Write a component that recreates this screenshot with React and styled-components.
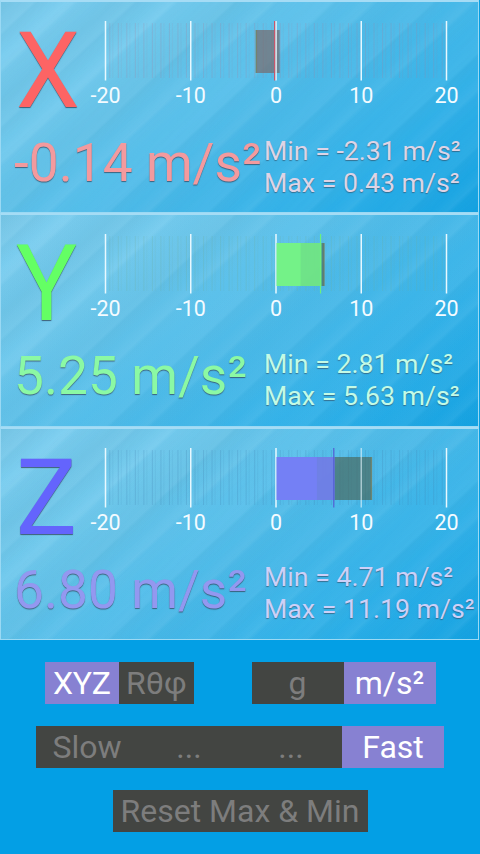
import styled, { createGlobalStyle } from "styled-components";

const GlobalStyle = createGlobalStyle`
  * {
    box-sizing: border-box;
  }
  body {
    margin: 0;
    background: #039fe5;
    font-family: Roboto, "Liberation Sans", sans-serif;
  }
`;

const Screen = styled.main`
  width: 480px;
  height: 854px;
  overflow: hidden;
  background: #039fe5;
`;

const Panel = styled.section`
  height: 213.3px;
  width: 479px;
  border: 1px solid #9ad9f4;
  border-top: 2px solid #a5dcf5;
  overflow: hidden;
  background:
    repeating-linear-gradient(
      137deg,
      rgba(255, 255, 255, 0) 0px,
      rgba(255, 255, 255, 0.05) 22px,
      rgba(80, 150, 180, 0.06) 25px,
      rgba(255, 255, 255, 0) 37px,
      rgba(255, 255, 255, 0.06) 49px,
      rgba(80, 150, 180, 0.03) 53px,
      rgba(255, 255, 255, 0) 68px
    ),
    linear-gradient(
      139deg,
      rgba(80, 140, 160, 0.16) 0%,
      rgba(255, 255, 255, 0.05) 9%,
      rgba(90, 150, 170, 0.12) 16%,
      rgba(255, 255, 255, 0.05) 24%,
      rgba(90, 150, 170, 0.08) 32%,
      rgba(255, 255, 255, 0.02) 42%,
      rgba(70, 150, 180, 0.05) 55%,
      rgba(255, 255, 255, 0) 70%,
      rgba(0, 110, 170, 0.04) 85%,
      rgba(0, 110, 170, 0.12) 100%
    ),
    linear-gradient(146deg, #79cdf0 0%, #68c6ec 28%, #42b7e9 62%, #16a8e8 100%);
`;

const PanelTop = styled.div`
  display: flex;
  height: 126px;
`;

const AxisLetter = styled.h1`
  flex: none;
  margin: 19px 0 0;
  padding-left: 15px;
  width: 83px;
  font-size: 106px;
  font-weight: 400;
  line-height: 100px;
  color: ${(props) => props.$color};
  text-shadow: 0 1px 1px rgba(40, 50, 70, 0.7);
  transform: scaleX(0.96);
  transform-origin: 18px 0;
`;

const Chart = styled.svg`
  display: block;
  flex: none;
  width: 394px;
  height: 126px;
  text {
    fill: #f4fbff;
    font-size: 21.5px;
    text-anchor: middle;
  }
`;

const PanelBottom = styled.div`
  display: flex;
  padding-left: 13px;
`;

const Reading = styled.div`
  flex: none;
  width: 250px;
  padding-top: 3px;
  font-size: 53.3px;
  line-height: 64px;
  white-space: nowrap;
  color: ${(props) => props.$color};
  text-shadow: 0 1px 1px rgba(50, 60, 80, 0.7);
`;

const Range = styled.div`
  padding-top: 6.6px;
  font-size: 26.7px;
  line-height: 32px;
  white-space: nowrap;
  color: ${(props) => props.$color};
  text-shadow: 0 1px 1px rgba(50, 70, 90, 0.6);
`;

const Controls = styled.section`
  display: flex;
  flex-direction: column;
  align-items: center;
  gap: 22px;
  padding-top: 22px;
`;

const ControlRow = styled.div`
  display: flex;
  gap: 58px;
`;

const ButtonGroup = styled.div`
  display: flex;
`;

const Button = styled.button`
  width: ${(props) => props.$width}px;
  height: 42px;
  padding: 0;
  border: none;
  border-radius: 0;
  font-family: inherit;
  font-size: 32px;
  line-height: 42px;
  letter-spacing: ${(props) => props.$spacing || 0}px;
  white-space: nowrap;
  color: ${(props) => (props.$active ? "#fff" : "#7d7d7d")};
  background: ${(props) => (props.$active ? "#8781d2" : "#434542")};
`;

const SCALE = 8.525;
const toX = (value) => 192 + value * SCALE;

const axes = [
  {
    name: "X",
    color: "#fd6464",
    reading: "#f39a9e",
    range: "#ded4e6",
    minor: "#a87f9c",
    bar: "#ff6464",
    marker: "#c9566c",
    now: -0.14,
    min: -2.31,
    max: 0.43,
  },
  {
    name: "Y",
    color: "#64ff64",
    reading: "#8bf9a4",
    range: "#c3fbe6",
    minor: "#6fae9a",
    bar: "#74f288",
    marker: "#6df07c",
    now: 5.25,
    min: 2.81,
    max: 5.63,
  },
  {
    name: "Z",
    color: "#6464fd",
    reading: "#9398f0",
    range: "#cdd0f8",
    minor: "#3f7fae",
    bar: "#7480f5",
    marker: "#5560d4",
    now: 6.8,
    min: 4.71,
    max: 11.19,
  },
];

const majors = [-20, -10, 0, 10, 20];
const minors = Array.from({ length: 40 }, (_, i) => i - 19.5);

const Gauge = ({ axis }) => {
  const { now, min, max, bar, minor, marker } = axis;
  const peak = now < 0 ? min : max;
  return (
    <Chart viewBox="0 0 394 126">
      {minors.map((tick) => (
        <g key={tick} stroke={minor}>
          <line x1={toX(tick)} x2={toX(tick)} y1="21" y2="76" opacity="0.24" />
          <line
            x1={toX(tick) + 3}
            x2={toX(tick) + 3}
            y1="21"
            y2="76"
            opacity="0.1"
          />
        </g>
      ))}
      <rect
        x={toX(min)}
        y="28"
        width={toX(max) - toX(min)}
        height="43"
        fill={now < 0 ? "#7a6462" : "#4a6558"}
        opacity="0.65"
      />
      {majors.map((tick) => (
        <g key={tick}>
          <line
            x1={toX(tick)}
            x2={toX(tick)}
            y1="19"
            y2="78.5"
            stroke="#e8f8ff"
            strokeWidth="1.5"
            opacity={tick > 0 && tick < max ? 0.6 : 1}
          />
          <text x={toX(tick)} y="100.5">
            {tick}
          </text>
        </g>
      ))}
      {now > 0 && (
        <>
          <rect
            x={toX(0) + 0.7}
            y="28"
            width={toX(now) - toX(0)}
            height="43"
            fill={bar}
            opacity="0.86"
          />
          <rect
            x={toX(0) + 0.7}
            y="28"
            width={toX(min) - toX(0)}
            height="43"
            fill={bar}
          />
        </>
      )}
      <line
        x1={toX(peak)}
        x2={toX(peak)}
        y1="28"
        y2="71"
        stroke="#7b7a54"
        strokeWidth="1.5"
        opacity="0.7"
      />
      <line
        x1={toX(now) - 0.2}
        x2={toX(now) - 0.2}
        y1="19"
        y2="78.5"
        stroke={marker}
        strokeWidth="1.2"
      />
    </Chart>
  );
};

const AxisPanel = ({ axis }) => (
  <Panel>
    <PanelTop>
      <AxisLetter $color={axis.color}>{axis.name}</AxisLetter>
      <Gauge axis={axis} />
    </PanelTop>
    <PanelBottom>
      <Reading $color={axis.reading}>{axis.now.toFixed(2)} m/s²</Reading>
      <Range $color={axis.range}>
        <div>Min = {axis.min.toFixed(2)} m/s²</div>
        <div>Max = {axis.max.toFixed(2)} m/s²</div>
      </Range>
    </PanelBottom>
  </Panel>
);

const App = () => {
  return (
    <>
      <GlobalStyle />
      <Screen>
        {axes.map((axis) => (
          <AxisPanel key={axis.name} axis={axis} />
        ))}
        <Controls>
          <ControlRow>
            <ButtonGroup>
              <Button $width={74.5} $spacing={-0.3} $active>
                XYZ
              </Button>
              <Button $width={74.5}>Rθφ</Button>
            </ButtonGroup>
            <ButtonGroup>
              <Button $width={92}>g</Button>
              <Button $width={92} $active>
                m/s²
              </Button>
            </ButtonGroup>
          </ControlRow>
          <ButtonGroup>
            <Button $width={102}>Slow</Button>
            <Button $width={102}>...</Button>
            <Button $width={102}>...</Button>
            <Button $width={102} $active>
              Fast
            </Button>
          </ButtonGroup>
          <Button $width={255}>Reset Max &amp; Min</Button>
        </Controls>
      </Screen>
    </>
  );
};

export default App;
